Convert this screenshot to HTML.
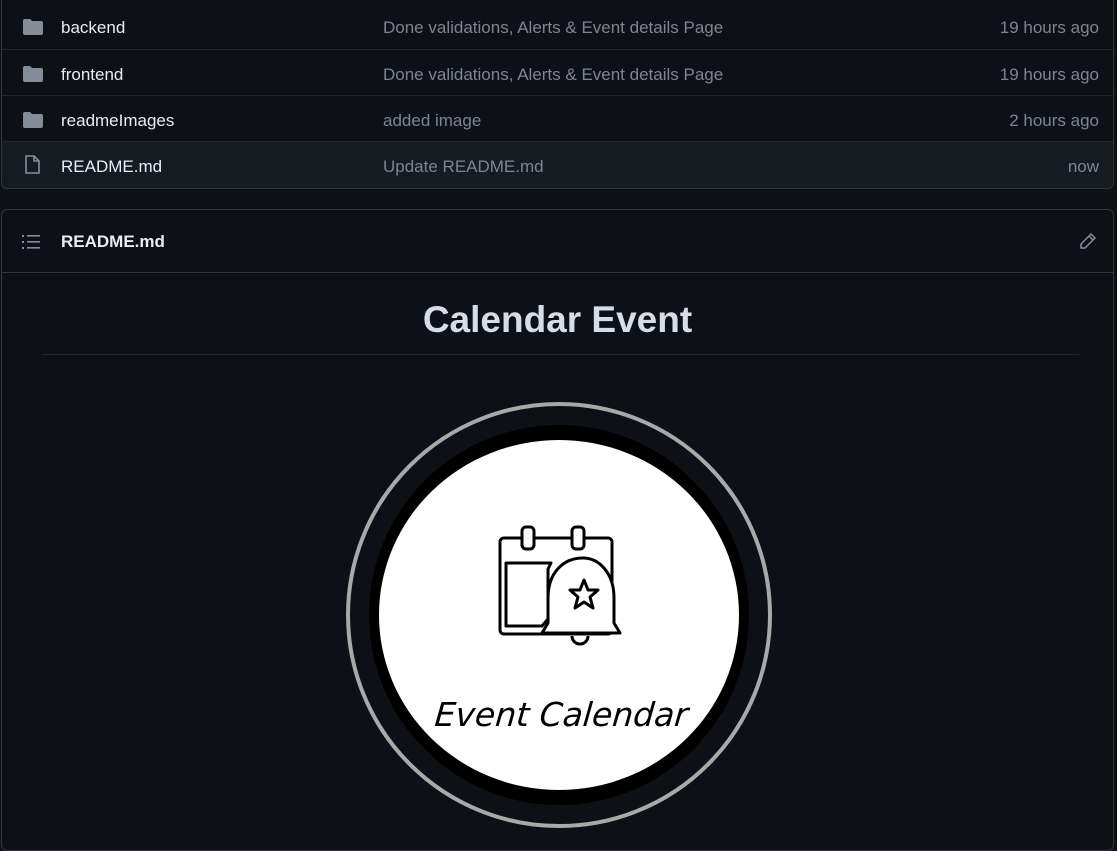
<!DOCTYPE html>
<html><head><meta charset="utf-8"><style>
body{margin:0;background:#0d1117;width:1117px;height:833px;overflow:hidden;font-family:"Liberation Sans",sans-serif;color:#e6edf3;position:relative}
.box{position:absolute;left:1px;right:3px;border:1px solid #30363d;border-radius:6px}
.row{position:absolute;left:0;right:0;height:46px;border-top:1px solid #21262d;font-size:17px}
.row .n{position:absolute;left:59px;top:15px;color:#e6edf3}
.row .m{position:absolute;left:381px;top:15px;color:#7d8590}
.row .t{position:absolute;right:14px;top:15px;color:#7d8590}
.row svg{position:absolute;left:20px;top:15px}
</style></head><body>
<div class="box" style="top:-6px;height:193px;border-top-left-radius:0;border-top-right-radius:0">
 <div class="row" style="top:8px;border-top:none"><svg width="22" height="18" viewBox="0 0 22 18"><path d="M1 3a2 2 0 0 1 2-2h5l2 2h9a2 2 0 0 1 2 2v10a2 2 0 0 1-2 2H3a2 2 0 0 1-2-2z" fill="#848d97"/></svg><span class="n">backend</span><span class="m">Done validations, Alerts &amp; Event details Page</span><span class="t">19 hours ago</span></div>
 <div class="row" style="top:54px"><svg width="22" height="18" viewBox="0 0 22 18"><path d="M1 3a2 2 0 0 1 2-2h5l2 2h9a2 2 0 0 1 2 2v10a2 2 0 0 1-2 2H3a2 2 0 0 1-2-2z" fill="#848d97"/></svg><span class="n">frontend</span><span class="m">Done validations, Alerts &amp; Event details Page</span><span class="t">19 hours ago</span></div>
 <div class="row" style="top:100px"><svg width="22" height="18" viewBox="0 0 22 18"><path d="M1 3a2 2 0 0 1 2-2h5l2 2h9a2 2 0 0 1 2 2v10a2 2 0 0 1-2 2H3a2 2 0 0 1-2-2z" fill="#848d97"/></svg><span class="n">readmeImages</span><span class="m">added image</span><span class="t">2 hours ago</span></div>
 <div class="row" style="top:146px;background:#161b22;border-radius:0 0 6px 6px"><svg width="22" height="20" viewBox="0 0 22 20" style="top:13px"><path d="M4 1h8l5 5v12H4z M12 1v5h5" fill="none" stroke="#848d97" stroke-width="1.6"/></svg><span class="n">README.md</span><span class="m">Update README.md</span><span class="t">now</span></div>
</div>
<div class="box" style="top:209px;height:640px">
 <div style="position:absolute;left:0;right:0;top:0;height:62px;border-bottom:1px solid #30363d">
  <svg width="20" height="16" viewBox="0 0 20 16" style="position:absolute;left:20px;top:24px"><g fill="#848d97"><rect x="0" y="1" width="2" height="2"/><rect x="0" y="7" width="2" height="2"/><rect x="0" y="13" width="2" height="2"/><rect x="5" y="1" width="13" height="1.6"/><rect x="5" y="7" width="13" height="1.6"/><rect x="5" y="13" width="13" height="1.6"/></g></svg>
  <span style="position:absolute;left:59px;top:22px;font-size:17px;font-weight:bold">README.md</span>
  <svg width="18" height="18" viewBox="0 0 18 18" style="position:absolute;right:16px;top:22px"><path d="M12 2l4 4-10 10H2v-4z M10 4l4 4" fill="none" stroke="#848d97" stroke-width="1.5"/></svg>
 </div>
 <div style="position:absolute;left:0;right:0;top:89px;text-align:center;font-size:37px;font-weight:bold;color:#d5dde6">Calendar Event</div>
 <div style="position:absolute;left:40px;right:34px;top:144px;border-top:1px solid #21262d"></div>
</div>
<svg width="1117" height="833" style="position:absolute;left:0;top:0">
 <circle cx="559" cy="615" r="211" fill="#0d1117" stroke="#a9a9a9" stroke-width="4"/>
 <circle cx="559" cy="615" r="190" fill="#000"/>
 <ellipse cx="559" cy="615" rx="180" ry="175" fill="#fff"/>
 <g fill="none" stroke="#000" stroke-width="3" stroke-linejoin="round">
  <rect x="500" y="538" width="112" height="96" rx="4"/>
  <path d="M506 563h45l-3 6v50l-6 7h-36z"/>
  <rect x="522" y="527" width="12" height="22" rx="4" fill="#fff"/>
  <rect x="572" y="527" width="12" height="22" rx="4" fill="#fff"/>
  <path d="M583 558c-20 0-35 15-35 40v25l-6 10h78l-6-10v-25c0-25-15-40-31-40z" fill="#fff"/>
  <path d="M572 636a8 8 0 0 0 16 0"/>
  <path d="M584 580l4 10h10l-8 7 3 11-9-6-9 6 3-11-8-7h10z"/>
 </g>
 <text x="561" y="726" text-anchor="middle" font-family="DejaVu Sans" font-style="italic" font-size="33" fill="#000" transform="skewX(-5) translate(63 0)">Event Calendar</text>
</svg>
</body></html>
